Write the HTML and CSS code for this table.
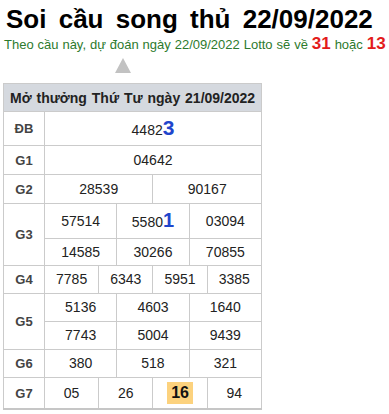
FILE: index.html
```html
<!DOCTYPE html>
<html lang="vi">
<head>
<meta charset="utf-8">
<title>Soi cầu song thủ 22/09/2022</title>
<link rel="stylesheet" href="styles.css">
</head>
<body>
<h1 class="title">Soi cầu song thủ 22/09/2022</h1>
<p class="predict">Theo cầu này, dự đoán ngày 22/09/2022 Lotto sẽ về <b class="hot">31</b> hoặc <b class="hot">13</b></p>
<div class="arrow"></div>
<table class="kq">
<colgroup><col class="c-label"><col span="12"></colgroup>
<tr class="r-head"><th colspan="13">Mở thưởng Thứ Tư ngày 21/09/2022</th></tr>
<tr class="r-db"><td class="lbl">ĐB</td><td colspan="12">4482<b class="hl">3</b></td></tr>
<tr class="r-g1"><td class="lbl">G1</td><td colspan="12">04642</td></tr>
<tr class="r-g2"><td class="lbl">G2</td><td colspan="6">28539</td><td colspan="6">90167</td></tr>
<tr class="r-g3a"><td class="lbl" rowspan="2">G3</td><td colspan="4">57514</td><td colspan="4">5580<b class="hl hl-sm">1</b></td><td colspan="4">03094</td></tr>
<tr class="r-g3b"><td colspan="4">14585</td><td colspan="4">30266</td><td colspan="4">70855</td></tr>
<tr class="r-std"><td class="lbl">G4</td><td colspan="3">7785</td><td colspan="3">6343</td><td colspan="3">5951</td><td colspan="3">3385</td></tr>
<tr class="r-std"><td class="lbl" rowspan="2">G5</td><td colspan="4">5136</td><td colspan="4">4603</td><td colspan="4">1640</td></tr>
<tr class="r-std"><td colspan="4">7743</td><td colspan="4">5004</td><td colspan="4">9439</td></tr>
<tr class="r-std"><td class="lbl">G6</td><td colspan="4">380</td><td colspan="4">518</td><td colspan="4">321</td></tr>
<tr class="r-g7"><td class="lbl">G7</td><td colspan="3">05</td><td colspan="3">26</td><td colspan="3"><span class="mark">16</span></td><td colspan="3">94</td></tr>
</table>
</body>
</html>
```

FILE: styles.css
```css
html, body {
  margin: 0;
  padding: 0;
  background: #fff;
}
body {
  font-family: "Liberation Sans", Arial, sans-serif;
  color: #222;
  padding: 5px 0 0 4px;
}
.title {
  margin: 0;
  padding-left: 2px;
  font-size: 26px;
  line-height: 29px;
  font-weight: bold;
  word-spacing: 5px;
  color: #000;
}
.predict {
  margin: 2px 0 0 0;
  font-size: 13px;
  line-height: 18px;
  word-spacing: 0.3px;
  color: #2d7a2d;
}
.hot {
  color: #e31b1b;
  font-size: 17px;
  line-height: 13px;
}
.arrow {
  width: 0;
  height: 0;
  margin: 4px 0 0 111px;
  border-left: 8px solid transparent;
  border-right: 8px solid transparent;
  border-bottom: 15px solid #c2c2c2;
}
.kq {
  margin: 10px 0 0 -1px;
  width: 259px;
  table-layout: fixed;
  border-collapse: collapse;
  border-bottom: 2px solid #c6c6c6;
  font-size: 14px;
}
.c-label {
  width: 41px;
}
.kq th,
.kq td {
  border: 1px solid #cbcbcb;
  padding: 0 2px;
  text-align: center;
  vertical-align: middle;
  white-space: nowrap;
}
.kq th {
  background: #d5d9df;
  text-align: left;
  padding-left: 6px;
  font-weight: bold;
  word-spacing: 1px;
  color: #222;
  height: 27px;
}
.kq td {
  height: 27px;
  line-height: 17px;
  color: #222;
}
.kq td.lbl {
  font-size: 13px;
  font-weight: bold;
  color: #444;
}
.r-db td { height: 33px; }
.r-g1 td, .r-g2 td { height: 28px; }
.r-g3a td { height: 34px; }
.r-g3b td { height: 26px; }
.r-g7 td { height: 30px; }
.hl {
  color: #1f45cc;
  font-size: 21px;
  line-height: 17px;
}
.hl-sm {
  font-size: 20px;
}
.mark {
  display: inline-block;
  background: #fcd27e;
  font-weight: bold;
  font-size: 16px;
  line-height: 18px;
  padding: 2px 4px;
  color: #111;
}
```
